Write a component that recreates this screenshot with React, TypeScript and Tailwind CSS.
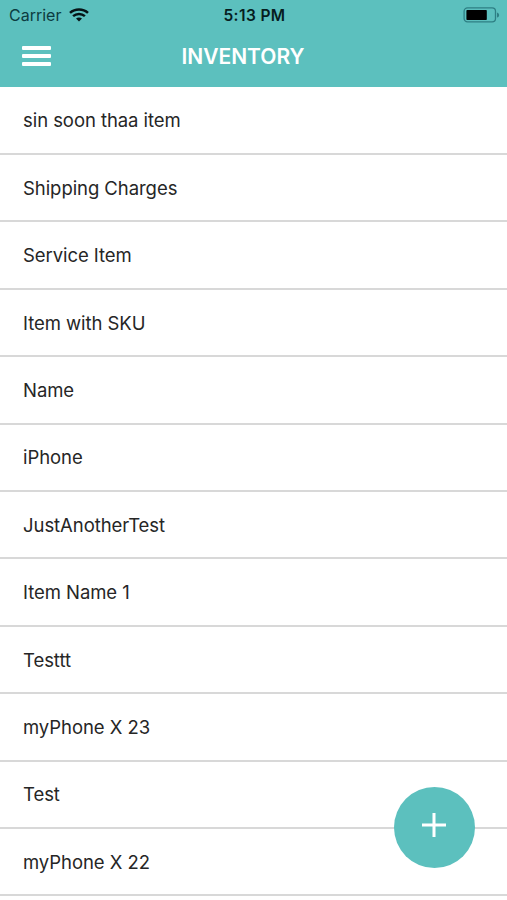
import React from 'react';

const items = [
  'sin soon thaa item',
  'Shipping Charges',
  'Service Item',
  'Item with SKU',
  'Name',
  'iPhone',
  'JustAnotherTest',
  'Item Name 1',
  'Testtt',
  'myPhone X 23',
  'Test',
  'myPhone X 22',
];

const WifiIcon = () => (
  <svg width="20" height="14" viewBox="0 0 20 14" fill="none" stroke="#061316" strokeWidth="2.5">
    <path d="M1 4.9C6 0.3 14 0.3 19 4.9" />
    <path d="M4.1 8.2C7.4 5.2 12.6 5.2 15.9 8.2" />
    <path d="M10 13.6L7 10.5C8.6 9.1 11.4 9.1 13 10.5Z" fill="#061316" stroke="none" />
  </svg>
);

const BatteryIcon = () => (
  <svg width="37" height="16" viewBox="0 0 37 16" fill="none">
    <rect x="1.1" y="0.9" width="31.4" height="14" rx="3.4" stroke="#2e7f84" strokeWidth="1.3" />
    <rect x="3.4" y="3" width="20.4" height="10" rx="0.8" fill="#000" />
    <path d="M34 5.4C36.8 6.3 36.8 9.7 34 10.6Z" fill="#2e7f84" />
  </svg>
);

const StatusBar = () => (
  <div className="grid h-[30px] grid-cols-3 items-center pl-[9px] pr-[7px] text-[#0c3c41]">
    <div className="flex items-center gap-[8px]">
      <span className="w-[52px] text-[16px] leading-[30px]">Carrier</span>
      <WifiIcon />
    </div>
    <span className="pt-[2px] text-center text-[15.5px] font-semibold leading-[28px] tracking-[0.4px] text-[#061d21]">
      5:13 PM
    </span>
    <div className="flex justify-end">
      <BatteryIcon />
    </div>
  </div>
);

const Header = () => (
  <header className="h-[87px] bg-[#5cc0be]">
    <StatusBar />
    <div className="grid h-[54px] grid-cols-[1fr_auto_1fr] items-center pl-[22px] pr-[43px]">
      <button type="button" aria-label="Menu" className="mb-[3px] flex w-[29px] flex-col gap-[4px]">
        <span className="h-[4px] w-full rounded-[1px] bg-white" />
        <span className="h-[4px] w-full rounded-[1px] bg-white" />
        <span className="h-[4px] w-full rounded-[1px] bg-white" />
      </button>
      <h1 className="text-[21px] font-semibold text-white">INVENTORY</h1>
    </div>
  </header>
);

const App = () => {
  return (
    <div className="relative h-[900px] w-[507px] overflow-hidden bg-white font-['Inter',sans-serif]">
      <Header />

      <ul className="pt-[0.6px]">
        {items.map((item) => (
          <li
            key={item}
            className="flex h-[67.4px] items-center border-b-2 border-[#d8d8d8] pl-[23px] pt-[2px] text-[18.5px] tracking-[-0.06px] text-[#262626]"
          >
            {item}
          </li>
        ))}
      </ul>

      <button
        type="button"
        aria-label="Add item"
        className="absolute bottom-[32.5px] right-[32.5px] flex size-[81px] items-center justify-center rounded-full bg-[#5cc0be]"
      >
        <svg width="24" height="24" viewBox="0 0 24 24" stroke="#fff" strokeWidth="3" className="-mt-[4px]">
          <path d="M12 0V24M0 12H24" />
        </svg>
      </button>
    </div>
  );
};

export default App;
